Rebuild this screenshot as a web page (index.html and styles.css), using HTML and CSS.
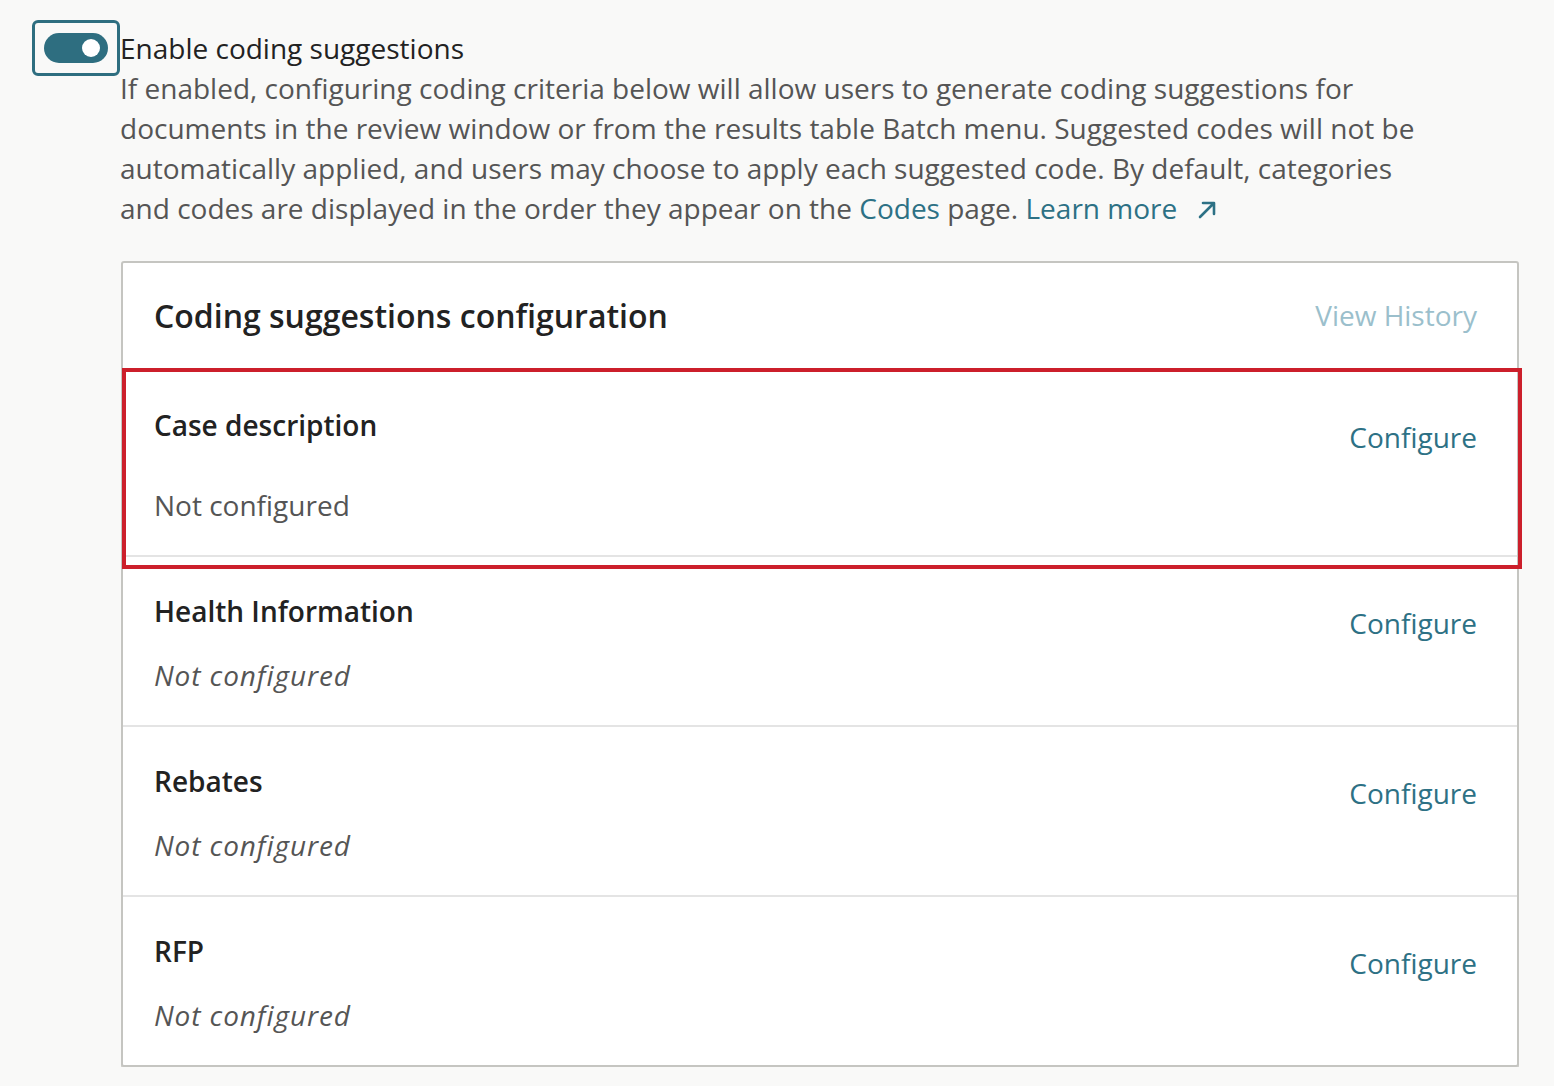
FILE: index.html
```html
<!DOCTYPE html>
<html lang="en">
<head>
<meta charset="utf-8">
<title>Coding suggestions</title>
<link rel="stylesheet" href="styles.css">
</head>
<body>
<main class="page">
  <section class="setting">
    <div class="toggle-focus">
      <span class="toggle"><span class="knob"></span></span>
    </div>
    <div class="setting-text">
      <div class="setting-label">Enable coding suggestions</div>
      <p class="setting-desc">If enabled, configuring coding criteria below will allow users to generate coding suggestions for documents in the review window or from the results table Batch menu. Suggested codes will not be automatically applied, and users may choose to apply each suggested code. By default, categories and codes are displayed in the order they appear on the <a class="link" href="#">Codes</a> page. <a class="link" href="#">Learn more<svg class="ext" width="20" height="20" viewBox="0 0 20 20"><path d="M3 17 L16.5 3.5 M6 3 H17 V14" fill="none" stroke="currentColor" stroke-width="2.6" stroke-linecap="round" stroke-linejoin="round"/></svg></a></p>
    </div>
  </section>

  <section class="card">
    <header class="card-header">
      <h2 class="card-title">Coding suggestions configuration</h2>
      <a class="history" href="#">View History</a>
    </header>

    <div class="row row-first">
      <div class="row-info">
        <div class="row-title">Case description</div>
        <div class="row-status plain">Not configured</div>
      </div>
      <a class="configure" href="#">Configure</a>
      <div class="highlight"></div>
    </div>

    <div class="row">
      <div class="row-info">
        <div class="row-title">Health Information</div>
        <div class="row-status">Not configured</div>
      </div>
      <a class="configure" href="#">Configure</a>
    </div>

    <div class="row">
      <div class="row-info">
        <div class="row-title">Rebates</div>
        <div class="row-status">Not configured</div>
      </div>
      <a class="configure" href="#">Configure</a>
    </div>

    <div class="row row-last">
      <div class="row-info">
        <div class="row-title">RFP</div>
        <div class="row-status">Not configured</div>
      </div>
      <a class="configure" href="#">Configure</a>
    </div>
  </section>
</main>
</body>
</html>
```

FILE: styles.css
```css
* { box-sizing: border-box; }

html, body {
  margin: 0;
  padding: 0;
  background: #f9f9f8;
}

body {
  font-family: "Open Sans", "Noto Sans", "Liberation Sans", sans-serif;
  color: #222;
}

.page {
  padding: 20px 0 0 32px;
}

.setting {
  display: flex;
  align-items: flex-start;
}

.toggle-focus {
  width: 88px;
  height: 56px;
  border: 3px solid #2e6e80;
  border-radius: 6px;
  display: flex;
  align-items: center;
  justify-content: center;
  flex: none;
}

.toggle {
  position: relative;
  width: 64px;
  height: 30px;
  border-radius: 15px;
  background: #2e6e80;
  display: block;
}

.knob {
  position: absolute;
  right: 8px;
  top: 6px;
  width: 18px;
  height: 18px;
  border-radius: 50%;
  background: #fff;
}

.setting-text {
  padding-top: 8px;
  width: 1312px;
}

.setting-label {
  font-size: 28px;
  line-height: 40px;
  color: #222;
}

.setting-desc {
  margin: 0;
  font-size: 28px;
  line-height: 40px;
  color: #555;
}

.link {
  color: #2d7185;
  text-decoration: none;
}

.ext {
  vertical-align: -1px;
  margin-left: 20px;
}

.card {
  margin: 33px 0 0 89px;
  width: 1398px;
  background: #fff;
  border: 2px solid #c5c5c1;
  border-radius: 3px;
  box-shadow: 0 2px 0 #d4d4d0;
}

.card-header {
  height: 107px;
  display: flex;
  align-items: center;
  justify-content: space-between;
  padding: 0 40px 1px 31px;
  border-bottom: 2px solid #e4e4e4;
}

.card-title {
  margin: 0;
  font-size: 32px;
  font-weight: 600;
  color: #222;
}

.history {
  font-size: 28px;
  color: #9bbfcc;
  text-decoration: none;
}

.row {
  position: relative;
  display: flex;
  justify-content: space-between;
  align-items: flex-start;
  padding: 34px 40px 30px 31px;
  border-bottom: 2px solid #e4e4e4;
}

.row-first {
  padding-top: 35px;
}

.row-last {
  border-bottom: none;
}

.row-title {
  font-size: 28px;
  line-height: 40px;
  font-weight: 600;
  color: #222;
}

.row-status {
  margin-top: 24px;
  font-size: 28px;
  line-height: 40px;
  font-style: italic;
  letter-spacing: 0.9px;
  color: #555;
}

.row-status.plain {
  margin-top: 40px;
  font-style: normal;
  letter-spacing: 0;
}

.configure {
  margin-top: 12px;
  font-size: 28px;
  line-height: 40px;
  color: #2d7185;
  text-decoration: none;
}

.highlight {
  position: absolute;
  top: -2px;
  left: -1px;
  right: -5px;
  bottom: -14px;
  border: 4px solid #cc1f2b;
  pointer-events: none;
}
```
